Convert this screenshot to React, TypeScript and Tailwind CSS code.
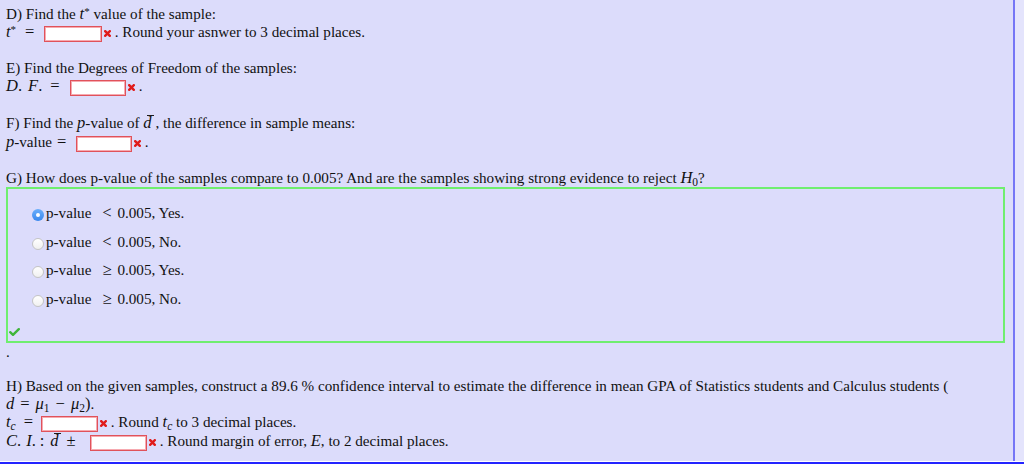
import React from "react";

const Input = ({ w }: { w: string }) => (
  <span
    className={`inline-block align-middle h-[16px] bg-white border border-[#e0525b] shadow-[inset_0_0_0_1px_#f6aab0] ${w}`}
  />
);

const XMark = () => (
  <svg width="7" height="7" viewBox="0 0 7 7" className="inline-block align-middle ml-[2px]">
    <path d="M1.2 1.2 L5.8 5.8 M5.8 1.2 L1.2 5.8" stroke="#e01b1b" strokeWidth="2.4" strokeLinecap="square" />
  </svg>
);

const M = ({ children }: { children: React.ReactNode }) => (
  <span className="italic text-[16.5px] leading-none">{children}</span>
);
const R = ({ children, cls = "" }: { children: React.ReactNode; cls?: string }) => (
  <span className={`text-[16.5px] leading-none ${cls}`}>{children}</span>
);

const DBar = () => (
  <span className="relative inline-block italic text-[16.5px] leading-[18px]">
    d
    <span className="absolute left-[4px] top-[1px] w-[7px] h-px bg-[#1b1b1b]" />
  </span>
);

const Sub = ({ children }: { children: React.ReactNode }) => (
  <span className="relative top-[3px] text-[11.5px] leading-none">{children}</span>
);
const Sup = ({ children }: { children: React.ReactNode }) => (
  <span className="relative -top-[4px] text-[11px] leading-none">{children}</span>
);

const Radio = ({ on }: { on?: boolean }) =>
  on ? (
    <span className="mt-[5px] w-[12px] h-[12px] rounded-full bg-gradient-to-b from-[#6aaefb] to-[#3a88ee] flex items-center justify-center shrink-0">
      <span className="w-[4px] h-[4px] rounded-full bg-white" />
    </span>
  ) : (
    <span className="mt-[5px] w-[12px] h-[12px] rounded-full bg-gradient-to-b from-white to-[#f0f0f0] border border-[#c4c4c4] shrink-0" />
  );

const Line = ({ children, h = "h-[18px]" }: { children?: React.ReactNode; h?: string }) => (
  <div className={`${h} leading-[18px] whitespace-nowrap`}>{children}</div>
);

const Option = ({ on, rel, tail }: { on?: boolean; rel: string; tail: string }) => (
  <div className="flex h-[28.6px] pl-[24px]">
    <Radio on={on} />
    <span className="ml-[2px] leading-[18px] whitespace-nowrap">
      p-value
      <span className="inline-block w-[11px] text-center ml-[10px] mr-[5px] text-[16.5px] leading-none">{rel}</span>
      {tail}
    </span>
  </div>
);

export default function App() {
  return (
    <div className="w-[1024px] h-[465px] overflow-hidden bg-white font-['Liberation_Serif','Times_New_Roman',serif] text-[15.15px] text-[#111111]">
      <div className="flex h-[461px]">
        <div className="w-[1013px] bg-[#dcdcfb] pt-[5px] pl-[6px]">
          {/* D */}
          <Line>
            D) Find the <M>t</M>
            <Sup>*</Sup> value of the sample:
          </Line>
          <Line>
            <span className="inline-block w-[38px]">
              <M>t</M>
              <Sup>*</Sup>
              <R cls="ml-[9px]">=</R>
            </span>
            <Input w="w-[58px]" />
            <XMark />
            <span> . Round your asnwer to 3 decimal places.</span>
          </Line>
          <Line />
          {/* E */}
          <Line>E) Find the Degrees of Freedom of the samples:</Line>
          <Line>
            <span className="inline-block w-[64px]">
              <M>D</M>
              <R>.</R>
              <M>
                <span className="ml-[6px]">F</span>
              </M>
              <R>.</R>
              <R cls="ml-[8px]">=</R>
            </span>
            <Input w="w-[56px]" />
            <XMark />
            <span> .</span>
          </Line>
          <Line h="h-[19px]" />
          {/* F */}
          <Line h="h-[19px]">
            F) Find the <M>p</M>-value of <DBar /> , the difference in sample means:
          </Line>
          <Line>
            <span className="inline-block w-[70px]">
              <M>p</M>-value<R cls="ml-[5px]">=</R>
            </span>
            <Input w="w-[56px]" />
            <XMark />
            <span> .</span>
          </Line>
          <Line />
          {/* G */}
          <Line>
            G) How does p-value of the samples compare to 0.005? And are the samples showing strong
            evidence to reject <M>H</M>
            <Sub>0</Sub>?
          </Line>
          <div className="w-[999px] h-[156px] border-2 border-[#6fee6f] pt-[15px]">
            <Option on rel="<" tail="0.005, Yes." />
            <Option rel="<" tail="0.005, No." />
            <Option rel="≥" tail="0.005, Yes." />
            <Option rel="≥" tail="0.005, No." />
            <div className="mt-[10px] pl-[1px]">
              <svg width="11" height="8" viewBox="0 0 11 8" className="block">
                <path d="M1.2 4.2 L4 6.8 L9.8 1.2" fill="none" stroke="#3fb53a" strokeWidth="2.4" strokeLinecap="round" strokeLinejoin="round" />
              </svg>
            </div>
          </div>
          <Line>.</Line>
          <div className="h-[16px]" />
          {/* H */}
          <Line>
            H) Based on the given samples, construct a 89.6 % confidence interval to estimate the
            difference in mean GPA of Statistics students and Calculus students (
          </Line>
          <Line>
            <M>d</M>
            <R cls="mx-[6px]">=</R>
            <M>μ</M>
            <Sub>1</Sub>
            <R cls="mx-[6px]">−</R>
            <M>μ</M>
            <Sub>2</Sub>
            <R>)</R>.
          </Line>
          <Line h="h-[19px]">
            <span className="inline-block w-[35px]">
              <M>t</M>
              <Sub>
                <i>c</i>
              </Sub>
              <R cls="ml-[8px]">=</R>
            </span>
            <Input w="w-[57px]" />
            <XMark />
            <span>
              {" "}
              . Round <M>t</M>
              <Sub>
                <i>c</i>
              </Sub>{" "}
              to 3 decimal places.
            </span>
          </Line>
          <Line>
            <span className="inline-block w-[84px]">
              <M>C</M>
              <R>.</R>
              <M>
                <span className="ml-[5px]">I</span>
              </M>
              <R>.</R>
              <R cls="ml-[4px] mr-[6px]">:</R>
              <DBar />
              <R cls="ml-[8px]">±</R>
            </span>
            <Input w="w-[57px]" />
            <XMark />
            <span>
              {" "}
              . Round margin of error, <M>E</M>, to 2 decimal places.
            </span>
          </Line>
        </div>
        <div className="w-[2px] bg-[#7676f6]" />
        <div className="flex-1 bg-[#e4e4fc]" />
      </div>
      <div className="h-px bg-white" />
      <div className="h-[2px] bg-[#2424ff]" />
    </div>
  );
}
